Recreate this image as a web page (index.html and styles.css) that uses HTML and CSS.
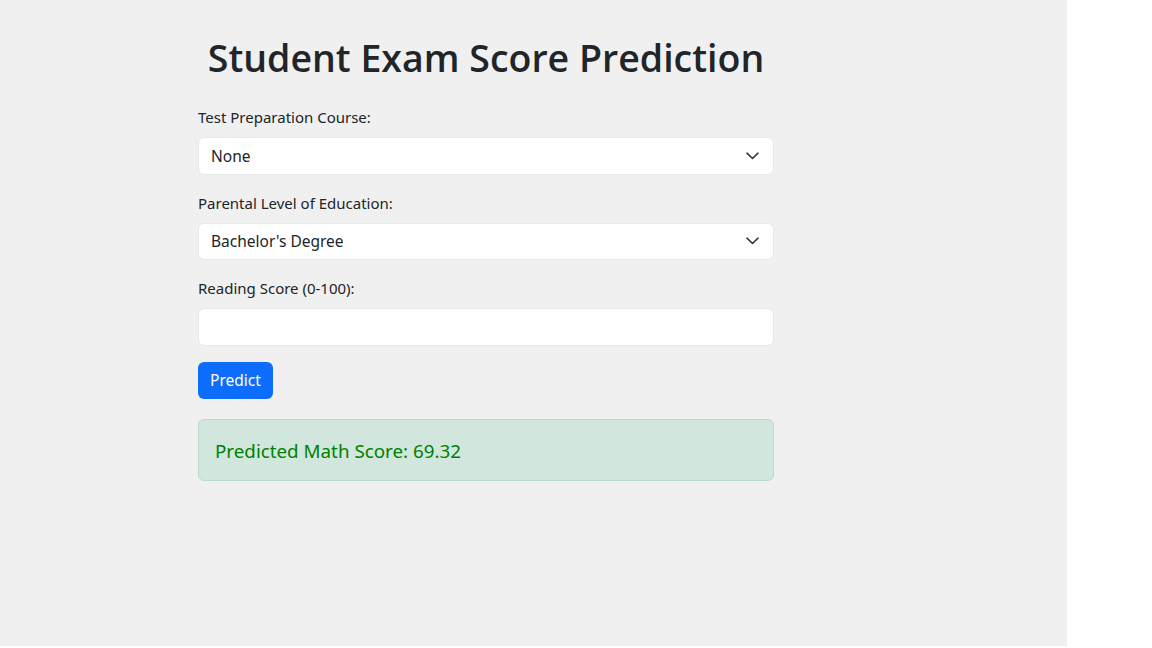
FILE: index.html
```html
<!DOCTYPE html>
<html lang="en">
<head>
<meta charset="utf-8">
<title>Student Exam Score Prediction</title>
<link rel="stylesheet" href="styles.css">
</head>
<body>
<div class="page">
  <div class="container">
    <h1 class="title">Student Exam Score Prediction</h1>
    <form class="form">
      <div class="group">
        <label class="label" for="prep">Test Preparation Course:</label>
        <div class="select" id="prep">
          <span class="select-value">None</span>
          <svg class="chev" width="13" height="8" viewBox="0 0 13 8"><path d="M1 1.2 6.5 6.5 12 1.2" fill="none" stroke="#343a40" stroke-width="1.6" stroke-linecap="round" stroke-linejoin="round"/></svg>
        </div>
      </div>
      <div class="group">
        <label class="label" for="edu">Parental Level of Education:</label>
        <div class="select" id="edu">
          <span class="select-value">Bachelor's Degree</span>
          <svg class="chev" width="13" height="8" viewBox="0 0 13 8"><path d="M1 1.2 6.5 6.5 12 1.2" fill="none" stroke="#343a40" stroke-width="1.6" stroke-linecap="round" stroke-linejoin="round"/></svg>
        </div>
      </div>
      <div class="group">
        <label class="label" for="score">Reading Score (0-100):</label>
        <div class="input" id="score"></div>
      </div>
      <div class="btn">Predict</div>
    </form>
    <div class="alert">Predicted Math Score: 69.32</div>
  </div>
</div>
</body>
</html>
```
FILE: styles.css
```css
* { box-sizing: border-box; }
html, body { margin: 0; padding: 0; background: #ffffff; }
body {
  font-family: "Noto Sans", "Open Sans", sans-serif;
  color: #212529;
}
.page {
  width: 1067px;
  height: 646px;
  background: #f0f0f0;
  padding-top: 34px;
}
.container {
  width: 576px;
  margin-left: 198px;
}
.title {
  margin: 0 0 23px 0;
  font-family: "Open Sans", "Noto Sans", sans-serif;
  font-size: 37.5px;
  line-height: 48px;
  font-weight: 600;
  text-align: center;
  letter-spacing: 0;
}
.form { display: flex; flex-direction: column; }
.group { display: flex; flex-direction: column; margin-bottom: 16px; }
.label {
  font-size: 15px;
  line-height: 24px;
  margin-bottom: 8px;
}
.select, .input {
  height: 37.5px;
  background: #ffffff;
  border: 1px solid #e6e8ea;
  border-radius: 6px;
  display: flex;
  align-items: center;
  justify-content: space-between;
  padding: 0 14px 0 12px;
  font-size: 15.5px;
}
.chev { display: block; }
.btn {
  align-self: flex-start;
  height: 37.5px;
  padding: 0 12px;
  background: #0d6efd;
  color: #ffffff;
  border-radius: 6px;
  font-size: 15.5px;
  display: flex;
  align-items: center;
}
.alert {
  margin-top: 20px;
  height: 62px;
  padding: 1px 16px 0 16px;
  background: #d1e7dd;
  border: 1px solid #badbcc;
  border-radius: 6px;
  color: #008000;
  font-size: 18.8px;
  display: flex;
  align-items: center;
}
```
